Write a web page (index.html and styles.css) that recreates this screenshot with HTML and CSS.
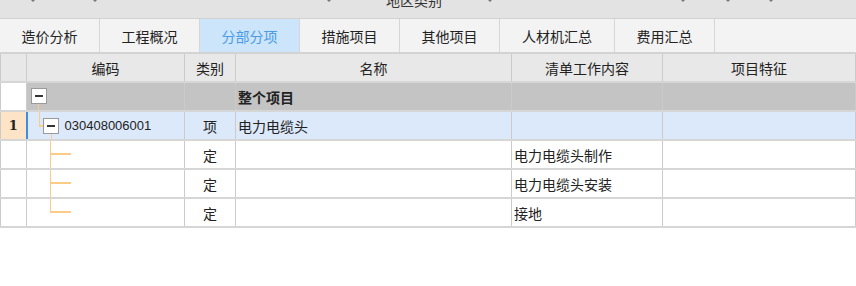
FILE: index.html
```html
<!DOCTYPE html>
<html lang="zh-CN">
<head>
    <meta charset="UTF-8">
    <title>分部分项</title>
    <link rel="stylesheet" href="styles.css">
</head>
<body>
<div class="topbar">
    <span class="arrow" style="left:31px"></span>
    <span class="arrow" style="left:93px"></span>
    <span class="arrow" style="left:327px"></span>
    <span class="arrow" style="left:488px"></span>
    <span class="arrow" style="left:681px"></span>
    <span class="arrow" style="left:726px"></span>
    <span class="arrow" style="left:769px"></span>
    <div class="region">地区类别</div>
</div>

<div class="tabs">
    <div class="tab">造价分析</div>
    <div class="tab">工程概况</div>
    <div class="tab active">分部分项</div>
    <div class="tab">措施项目</div>
    <div class="tab">其他项目</div>
    <div class="tab wide">人材机汇总</div>
    <div class="tab">费用汇总</div>
</div>

<table class="grid">
    <colgroup>
        <col style="width:26px">
        <col style="width:158px">
        <col style="width:51px">
        <col style="width:276px">
        <col style="width:151px">
        <col>
    </colgroup>
    <tr class="head">
        <th></th>
        <th>编码</th>
        <th>类别</th>
        <th>名称</th>
        <th>清单工作内容</th>
        <th>项目特征</th>
    </tr>
    <tr class="whole">
        <td class="num"></td>
        <td class="code"><div class="tree"><span class="box b1"></span><span class="ln v1-down"></span></div></td>
        <td></td>
        <td class="bold">整个项目</td>
        <td></td>
        <td></td>
    </tr>
    <tr class="selected">
        <td class="num">1</td>
        <td class="code"><div class="tree"><span class="ln v1-up"></span><span class="ln h1"></span><span class="box b2"></span><span class="ln v2-down"></span><span class="codetext">030408006001</span></div></td>
        <td class="center">项</td>
        <td>电力电缆头</td>
        <td></td>
        <td></td>
    </tr>
    <tr>
        <td class="num"></td>
        <td class="code"><div class="tree"><span class="ln v2-full"></span><span class="ln h2"></span></div></td>
        <td class="center">定</td>
        <td></td>
        <td>电力电缆头制作</td>
        <td></td>
    </tr>
    <tr>
        <td class="num"></td>
        <td class="code"><div class="tree"><span class="ln v2-full"></span><span class="ln h2"></span></div></td>
        <td class="center">定</td>
        <td></td>
        <td>电力电缆头安装</td>
        <td></td>
    </tr>
    <tr>
        <td class="num"></td>
        <td class="code"><div class="tree"><span class="ln v2-up"></span><span class="ln h2"></span></div></td>
        <td class="center">定</td>
        <td></td>
        <td>接地</td>
        <td></td>
    </tr>
</table>
</body>
</html>
```

FILE: styles.css
```css
html,
body {
    margin: 0;
    padding: 0;
    background: #fff;
    font-family: "Noto Sans CJK SC", "Liberation Sans", sans-serif;
    font-size: 14px;
    color: #222;
}

.topbar {
    position: relative;
    height: 18px;
    background: #e3e3e3;
    border-bottom: 1px solid #d2d2d2;
    overflow: hidden;
}

.topbar .region {
    margin-top: -10px;
    text-align: center;
    padding-right: 28px;
    font-size: 14px;
    color: #333;
}

.arrow {
    position: absolute;
    top: 0;
    width: 0;
    height: 0;
    border-left: 2px solid transparent;
    border-right: 2px solid transparent;
    border-top: 2px solid #777;
}

.tabs {
    display: flex;
    height: 33px;
    background: #f3f3f3;
    border-bottom: 2px solid #d3d3d3;
}

.tab {
    width: 99px;
    border-right: 1px solid #d6d6d6;
    display: flex;
    align-items: center;
    justify-content: center;
    color: #222;
}

.tab.wide {
    width: 114px;
}

.tab.active {
    background: #cce5fb;
    color: #4a9be6;
}

.grid {
    width: 856px;
    table-layout: fixed;
    border-collapse: collapse;
}

.grid th,
.grid td {
    height: 27px;
    padding: 0 2px;
    border-right: 1px solid #cbcbcb;
    border-bottom: 2px solid #d6d6d6;
    white-space: nowrap;
    overflow: hidden;
}

.grid th:first-child,
.grid td:first-child {
    border-left: 1px solid #cbcbcb;
}

.grid th {
    background: #e8e8e8;
    font-weight: normal;
    text-align: center;
}

.grid tr.whole td {
    background: #c4c4c4;
}

.grid tr.selected td {
    background: #dce9fb;
}

.grid td.num {
    background: #fff;
    text-align: center;
}

.grid tr.whole td.num {
    background: #fff;
}

.grid tr.selected td.num {
    background: #fde4c6;
    font-family: "DejaVu Serif", serif;
    font-weight: bold;
    font-size: 13px;
}

.grid tr.selected td.code {
    border-left: 2px solid #3d8ee2;
}

.grid td.center {
    text-align: center;
}

.grid td.bold {
    font-weight: bold;
}

.grid td.code {
    padding: 0;
}

.tree {
    position: relative;
    height: 27px;
}

.box {
    position: absolute;
    width: 14px;
    height: 14px;
    background: #fff;
    border: 1px solid #9a9a9a;
}

.box::after {
    content: "";
    position: absolute;
    left: 3px;
    right: 3px;
    top: 6px;
    height: 2px;
    background: #333;
}

.b1 {
    left: 4px;
    top: 5px;
}

.b2 {
    left: 15px;
    top: 6px;
}

.ln {
    position: absolute;
    background: #fccb85;
}

.v1-down {
    left: 11px;
    top: 21px;
    width: 1px;
    height: 8px;
}

.v1-up {
    left: 11px;
    top: -2px;
    width: 1px;
    height: 16px;
}

.h1 {
    left: 11px;
    top: 13px;
    width: 5px;
    height: 2px;
}

.v2-down {
    left: 23px;
    top: 22px;
    width: 1px;
    height: 7px;
}

.v2-full {
    left: 23px;
    top: -2px;
    width: 1px;
    height: 31px;
}

.v2-up {
    left: 23px;
    top: -2px;
    width: 1px;
    height: 16px;
}

.h2 {
    left: 23px;
    top: 12px;
    width: 21px;
    height: 2px;
}

.codetext {
    position: absolute;
    left: 37px;
    top: 6px;
    font-family: "Liberation Sans", sans-serif;
    font-size: 13px;
}
```
